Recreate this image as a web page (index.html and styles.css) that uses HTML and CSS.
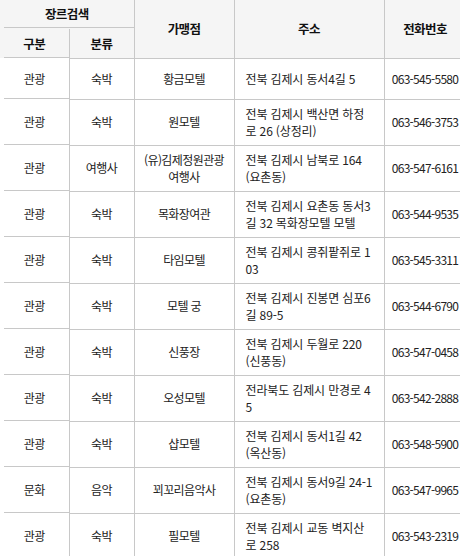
FILE: index.html
```html
<!DOCTYPE html>
<html lang="ko">
<head>
<meta charset="utf-8">
<link rel="stylesheet" href="styles.css">
</head>
<body>
<div class="wrap">
<table class="list">
  <colgroup>
    <col class="c1"><col class="c2"><col class="c3"><col class="c4"><col class="c5">
  </colgroup>
  <thead>
    <tr class="h1">
      <th colspan="2" class="first">장르검색</th>
      <th rowspan="2">가맹점</th>
      <th rowspan="2">주소</th>
      <th rowspan="2">전화번호</th>
    </tr>
    <tr class="h2">
      <th class="first">구분</th>
      <th>분류</th>
    </tr>
  </thead>
  <tbody>
    <tr class="single"><td class="first">관광</td><td>숙박</td><td>황금모텔</td><td class="addr">전북 김제시 동서4길 5</td><td class="tel">063-545-5580</td></tr>
    <tr><td class="first">관광</td><td>숙박</td><td>원모텔</td><td class="addr">전북 김제시 백산면 하정로 26 (상정리)</td><td class="tel">063-546-3753</td></tr>
    <tr><td class="first">관광</td><td>여행사</td><td>(유)김제정원관광여행사</td><td class="addr">전북 김제시 남북로 164 (요촌동)</td><td class="tel">063-547-6161</td></tr>
    <tr><td class="first">관광</td><td>숙박</td><td>목화장여관</td><td class="addr">전북 김제시 요촌동 동서3길 32 목화장모텔 모텔</td><td class="tel">063-544-9535</td></tr>
    <tr><td class="first">관광</td><td>숙박</td><td>타임모텔</td><td class="addr">전북 김제시 콩쥐팥쥐로 103</td><td class="tel">063-545-3311</td></tr>
    <tr><td class="first">관광</td><td>숙박</td><td>모텔 궁</td><td class="addr">전북 김제시 진봉면 심포6길 89-5</td><td class="tel">063-544-6790</td></tr>
    <tr><td class="first">관광</td><td>숙박</td><td>신풍장</td><td class="addr">전북 김제시 두월로 220 (신풍동)</td><td class="tel">063-547-0458</td></tr>
    <tr><td class="first">관광</td><td>숙박</td><td>오성모텔</td><td class="addr">전라북도 김제시 만경로 45</td><td class="tel">063-542-2888</td></tr>
    <tr><td class="first">관광</td><td>숙박</td><td>샵모텔</td><td class="addr">전북 김제시 동서1길 42 (옥산동)</td><td class="tel">063-548-5900</td></tr>
    <tr><td class="first">문화</td><td>음악</td><td>꾀꼬리음악사</td><td class="addr">전북 김제시 동서9길 24-1 (요촌동)</td><td class="tel">063-547-9965</td></tr>
    <tr><td class="first">관광</td><td>숙박</td><td>필모텔</td><td class="addr">전북 김제시 교동 벽지산로 258</td><td class="tel">063-543-2319</td></tr>
  </tbody>
</table>
</div>
</body>
</html>
```
FILE: styles.css
```css
html, body {
  margin: 0;
  padding: 0;
  background: #fff;
  overflow: hidden;
}
.wrap {
  width: 460px;
  overflow: hidden;
}
.list {
  width: 466px;
  table-layout: fixed;
  border-collapse: collapse;
  font-family: "Noto Sans CJK KR", "Noto Sans", sans-serif;
  font-size: 12px;
  letter-spacing: -0.6px;
  line-height: 17px;
  color: #222;
}
.c1 { width: 69px; }
.c2 { width: 65px; }
.c3 { width: 100px; }
.c4 { width: 150px; }
.c5 { width: 82px; }
.list th,
.list td {
  border: 1px solid #c8c8c8;
  padding: 5px 6px 6px;
  text-align: center;
  vertical-align: middle;
  word-break: break-all;
}
.list th {
  background: #f5f5f5;
  font-weight: bold;
  color: #111;
  font-size: 12.5px;
  padding: 4px 6px;
}
.list tr > :first-child { border-left: none; }
.list thead tr:first-child > * { border-top: none; }
.list .first {
  border-bottom-color: transparent;
  background-image: linear-gradient(#c8c8c8, #c8c8c8);
  background-repeat: no-repeat;
  background-position: 4px 100%;
  background-size: calc(100% - 4px) 1px;
}
.h1 { height: 28px; }
.h2 { height: 30px; }
.single { height: 41px; }
.list td.addr {
  text-align: left;
  padding-left: 11px;
  padding-right: 10px;
  letter-spacing: -0.15px;
}
.list td.tel {
  letter-spacing: -0.7px;
}
```
